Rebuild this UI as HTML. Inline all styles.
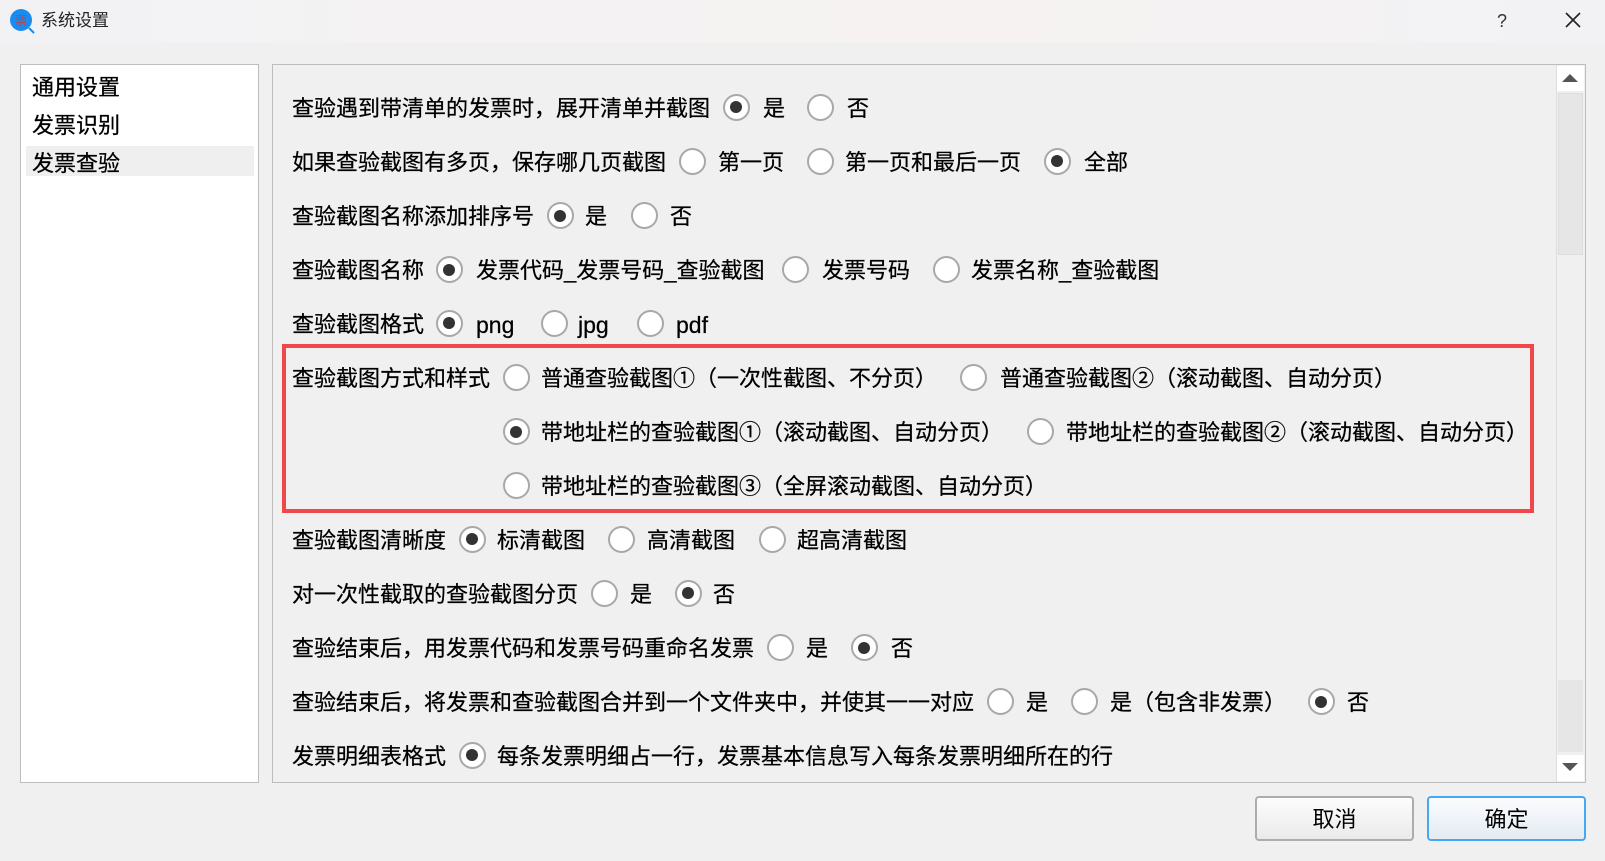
<!DOCTYPE html>
<html><head><meta charset="utf-8"><style>
*{margin:0;padding:0;box-sizing:border-box}
body{width:1605px;height:861px;background:#f0f0f0;font-family:"Liberation Sans","Noto Sans CJK SC",sans-serif;color:#000;position:relative;overflow:hidden}
.title{position:absolute;left:0;top:0;width:1605px;height:43px;background:linear-gradient(90deg,#f2f2f4,#f6f2f2 60%,#f2f2f4)}
.t{position:absolute;white-space:nowrap;font-size:22px;line-height:28px;-webkit-text-stroke:0.25px #000}
.r{position:absolute;width:27px;height:27px;border:2px solid #a8a8a8;border-radius:50%;background:#fff}
.r.c::after{content:"";position:absolute;left:5.5px;top:5.5px;width:12px;height:12px;border-radius:50%;background:#333}
.btn{position:absolute;top:796px;width:159px;height:45px;border:2px solid #adadad;border-radius:4px;background:linear-gradient(#fdfdfd,#eaeaea);font-size:22px;text-align:center;line-height:43px}
</style></head><body>
<div class="title"></div>
<svg style="position:absolute;left:9px;top:8px" width="26" height="26"><circle cx="12" cy="12" r="11" fill="#1a8cf0"/><line x1="20" y1="20" x2="25" y2="25" stroke="#1a8cf0" stroke-width="2"/><text x="12" y="17" font-size="12" fill="#c84040" text-anchor="middle" font-family="Noto Sans CJK SC">票</text></svg>
<div class="t" style="left:41px;top:7px;font-size:17px;color:#222;-webkit-text-stroke:0">系统设置</div>
<div class="t" style="left:1497px;top:7px;font-size:18px;color:#333;-webkit-text-stroke:0">?</div>
<svg style="position:absolute;left:1565px;top:12px" width="16" height="16"><path d="M1 1L15 15M15 1L1 15" stroke="#222" stroke-width="1.6"/></svg>

<div style="position:absolute;left:20px;top:64px;width:239px;height:719px;background:#fff;border:1px solid #bdbdbd"></div>
<div style="position:absolute;left:26px;top:146px;width:228px;height:30px;background:#efefef"></div>
<div class="t" style="left:32px;top:74px">通用设置</div>
<div class="t" style="left:32px;top:112px">发票识别</div>
<div class="t" style="left:32px;top:150px">发票查验</div>

<div style="position:absolute;left:272px;top:64px;width:1314px;height:719px;border:1px solid #bdbdbd;background:#f0f0f0"></div>
<div style="position:absolute;left:1556px;top:65px;width:29px;height:717px;background:#f0f0f0;border-left:1px solid #ddd"></div>
<div style="position:absolute;left:1557px;top:66px;width:27px;height:25px;background:#fff"></div>
<div style="position:absolute;left:1558px;top:93px;width:25px;height:162px;background:#e6e6e6;border:1px solid #ddd"></div>
<div style="position:absolute;left:1558px;top:680px;width:25px;height:72px;background:#e6e6e6"></div>
<div style="position:absolute;left:1557px;top:755px;width:27px;height:26px;background:#fff"></div>
<svg style="position:absolute;left:1561px;top:72px" width="18" height="12"><path d="M1 10L9 2L17 10Z" fill="#555"/></svg>
<svg style="position:absolute;left:1561px;top:761px" width="18" height="12"><path d="M1 2L9 10L17 2Z" fill="#555"/></svg>

<div style="position:absolute;left:282px;top:344px;width:1252px;height:169px;border:4px solid #f0474c"></div>

<div id="c"></div>
<div class="btn" style="left:1255px">取消</div>
<div class="btn" style="left:1427px;border-color:#45a8f5;background:linear-gradient(#fbfcfe,#e4ebf3)">确定</div>
<script>
var rows=[
[107.5,"查验遇到带清单的发票时，展开清单并截图",[[736,1,"是",763],[820,0,"否",847]]],
[161.7,"如果查验截图有多页，保存哪几页截图",[[692,0,"第一页",718],[820,0,"第一页和最后一页",845],[1057,1,"全部",1084]]],
[216,"查验截图名称添加排序号",[[560,1,"是",585],[644,0,"否",670]]],
[270,"查验截图名称",[[449,1,"发票代码_发票号码_查验截图",476],[795,0,"发票号码",822],[946,0,"发票名称_查验截图",971]]],
[323.5,"查验截图格式",[[449,1,"png",476],[554,0,"jpg",578],[650,0,"pdf",676]]],
[377.7,"查验截图方式和样式",[[516,0,"普通查验截图①（一次性截图、不分页）",541],[973,0,"普通查验截图②（滚动截图、自动分页）",1000]]],
[432,"",[[516,1,"带地址栏的查验截图①（滚动截图、自动分页）",541],[1040,0,"带地址栏的查验截图②（滚动截图、自动分页）",1066]]],
[486,"",[[516,0,"带地址栏的查验截图③（全屏滚动截图、自动分页）",541]]],
[539.5,"查验截图清晰度",[[472,1,"标清截图",497],[621,0,"高清截图",647],[772,0,"超高清截图",797]]],
[593.7,"对一次性截取的查验截图分页",[[604,0,"是",630],[688,1,"否",713]]],
[648,"查验结束后，用发票代码和发票号码重命名发票",[[780,0,"是",806],[864,1,"否",891]]],
[702,"查验结束后，将发票和查验截图合并到一个文件夹中，并使其一一对应",[[1000,0,"是",1026],[1084,0,"是（包含非发票）",1110],[1321,1,"否",1347]]],
[755.5,"发票明细表格式",[[472,1,"每条发票明细占一行，发票基本信息写入每条发票明细所在的行",497]]]];
var h="";
rows.forEach(function(r){var y=r[0];
if(r[1])h+='<div class="t" style="left:292px;top:'+(y-13)+'px">'+r[1]+'</div>';
r[2].forEach(function(o){var big=/^[a-z]+$/.test(o[2])?'font-size:23px;':'';h+='<div class="r'+(o[1]?' c':'')+'" style="left:'+(o[0]-13.5)+'px;top:'+(y-14)+'px"></div><div class="t" style="'+big+'left:'+o[3]+'px;top:'+(y-13)+'px">'+o[2]+'</div>';});});
document.getElementById("c").innerHTML=h;
</script>
</body></html>
